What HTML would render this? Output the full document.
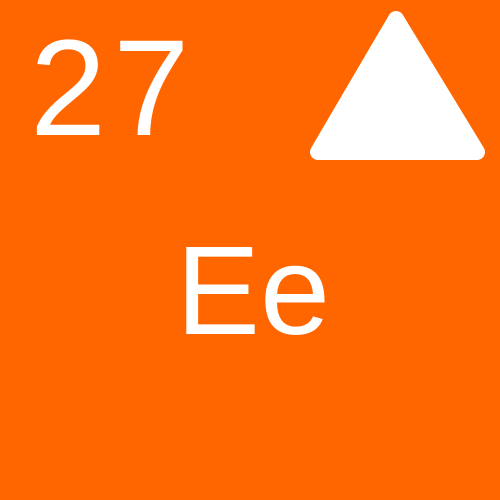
<!DOCTYPE html>
<html><head><style>
html,body{margin:0;padding:0;}
body{width:500px;height:500px;background:#FF6600;position:relative;overflow:hidden;font-family:"Liberation Sans",sans-serif;color:#fff;}
.t{position:absolute;line-height:1;white-space:nowrap;}
</style></head><body>
<div class="t" style="left:30px;top:20px;font-size:137px;letter-spacing:7px;">27</div>
<div class="t" style="left:176px;top:228px;font-size:126px;">Ee</div>
<svg style="position:absolute;left:0;top:0" width="500" height="500">
<polygon points="396,19 318,152 477,152" fill="#fff" stroke="#fff" stroke-width="16" stroke-linejoin="round"/>
</svg>
</body></html>
